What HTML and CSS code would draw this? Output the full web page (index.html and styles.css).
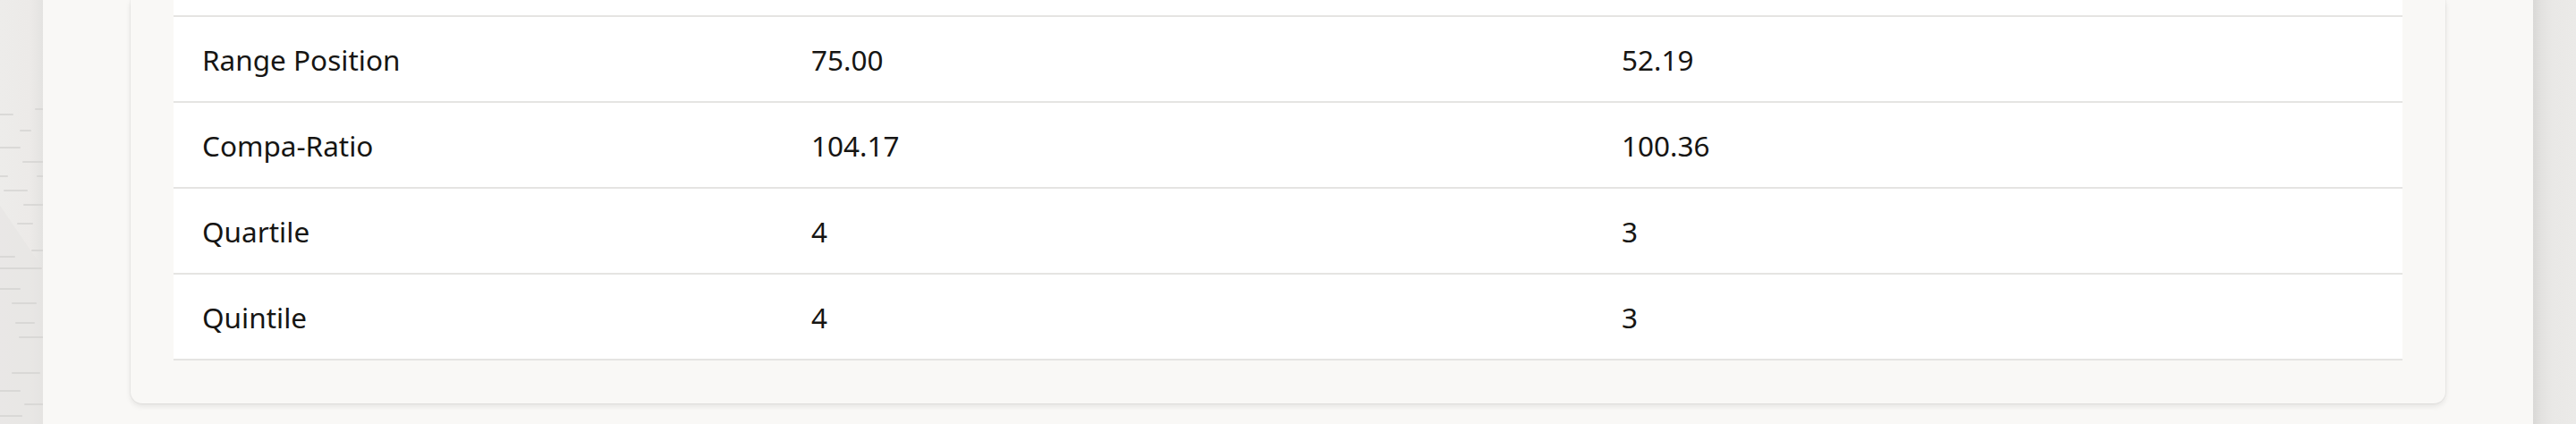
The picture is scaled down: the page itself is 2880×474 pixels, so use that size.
FILE: index.html
```html
<!DOCTYPE html>
<html lang="en">
<head>
<meta charset="utf-8">
<title>Salary metrics</title>
<link rel="stylesheet" href="styles.css">
</head>
<body>
  <div class="side side-left">
    <svg class="pattern" width="48" height="474" viewBox="0 0 48 474" aria-hidden="true">
      <polygon points="0,230 48,300 48,474 0,474" fill="#e6e5e3" opacity="0.6"/>
      <g stroke="#d6d5d3" stroke-width="2" stroke-linecap="round" opacity="0.8">
        <line x1="40" y1="122" x2="48" y2="122"/>
        <line x1="0" y1="128" x2="14" y2="128"/>
        <line x1="23" y1="146" x2="34" y2="146"/>
        <line x1="0" y1="165" x2="22" y2="165"/>
        <line x1="26" y1="181" x2="48" y2="181"/>
        <line x1="0" y1="197" x2="8" y2="197"/>
        <line x1="42" y1="197" x2="48" y2="197"/>
        <line x1="5" y1="213" x2="30" y2="213"/>
        <line x1="27" y1="229" x2="48" y2="229"/>
        <line x1="20" y1="250" x2="36" y2="250"/>
        <line x1="36" y1="280" x2="48" y2="280"/>
        <line x1="0" y1="287" x2="16" y2="287"/>
        <line x1="0" y1="300" x2="46" y2="300"/>
        <line x1="0" y1="323" x2="22" y2="323"/>
        <line x1="14" y1="339" x2="40" y2="339"/>
        <line x1="18" y1="361" x2="38" y2="361"/>
        <line x1="22" y1="377" x2="48" y2="377"/>
        <line x1="14" y1="417" x2="44" y2="417"/>
        <line x1="0" y1="437" x2="22" y2="437"/>
        <line x1="28" y1="452" x2="48" y2="452"/>
        <line x1="0" y1="465" x2="24" y2="465"/>
      </g>
    </svg>
  </div>
  <main class="panel">
    <section class="card">
      <div class="table">
        <div class="row row-tail"></div>
        <div class="row">
          <div class="cell">Range Position</div>
          <div class="cell">75.00</div>
          <div class="cell">52.19</div>
        </div>
        <div class="row">
          <div class="cell">Compa-Ratio</div>
          <div class="cell">104.17</div>
          <div class="cell">100.36</div>
        </div>
        <div class="row">
          <div class="cell">Quartile</div>
          <div class="cell">4</div>
          <div class="cell">3</div>
        </div>
        <div class="row">
          <div class="cell">Quintile</div>
          <div class="cell">4</div>
          <div class="cell">3</div>
        </div>
      </div>
    </section>
  </main>
  <div class="side side-right"></div>
</body>
</html>
```

FILE: styles.css
```css
html, body {
  margin: 0;
  padding: 0;
}

body {
  display: flex;
  height: 474px;
  overflow: hidden;
  background: #ebeae8;
  font-family: "Noto Sans", "DejaVu Sans", sans-serif;
  color: #161513;
}

.side {
  flex: 0 0 48px;
  height: 474px;
}

.side-left {
  background: linear-gradient(90deg, #edecea 0%, #eceae8 70%, #e4e3e1 100%);
}

.pattern {
  display: block;
}

.side-right {
  background: linear-gradient(90deg, #d9d8d6 0%, #e3e2e0 20%, #e9e8e6 45%, #ebeae8 100%);
}

.panel {
  flex: 0 0 2784px;
  box-sizing: border-box;
  height: 474px;
  padding: 0 98px;
  background: #f9f8f6;
}

.card {
  box-sizing: border-box;
  padding: 0 48px 48px;
  background: #f9f8f6;
  border-radius: 0 0 13px 13px;
  box-shadow: 0 0 0 1px rgba(0, 0, 0, 0.035), 0 3px 6px rgba(0, 0, 0, 0.09);
}

.table {
  display: flex;
  flex-direction: column;
}

.row {
  display: grid;
  grid-template-columns: 681px 906px 1fr;
  align-items: center;
  height: 94px;
  background: #ffffff;
  border-bottom: 2px solid #e5e4e2;
}

.row-tail {
  height: 17px;
}

.cell {
  padding: 1px 0 0 32px;
  font-size: 31.5px;
  line-height: 40px;
}
```
